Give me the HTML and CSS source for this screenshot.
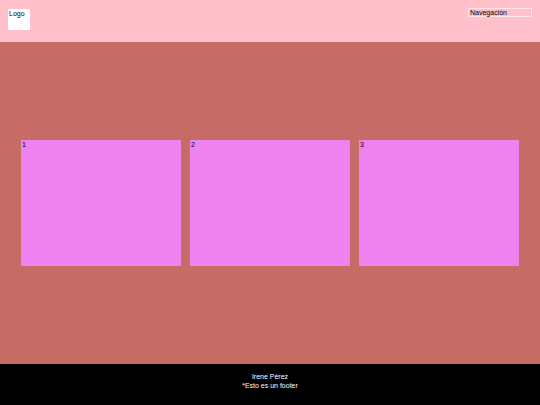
FILE: index.html
```html
<!DOCTYPE html>
<html lang="es">
<head>
<meta charset="utf-8">
<link rel="stylesheet" href="styles.css">
<title>Page</title>
</head>
<body>
<header class="header">
  <div class="logo">Logo</div>
  <nav class="nav">Navegación</nav>
</header>
<main class="main">
  <div class="cards">
    <div class="card">1</div>
    <div class="card">2</div>
    <div class="card">3</div>
  </div>
</main>
<footer class="footer">
  <p>Irene Pérez</p>
  <p>*Esto es un footer</p>
</footer>
</body>
</html>
```
FILE: styles.css
```css
html, body {
  margin: 0;
  padding: 0;
}
body {
  width: 540px;
  height: 405px;
  display: flex;
  flex-direction: column;
  font-family: "Liberation Sans", Arial, sans-serif;
  font-size: 7px;
}
.header {
  height: 42px;
  background: #ffc0cb;
  display: flex;
  justify-content: space-between;
  align-items: flex-start;
  padding: 8px 8px 0 8px;
  box-sizing: border-box;
}
.logo {
  width: 22px;
  height: 21px;
  margin-top: 1px;
  background: #ffffff;
  line-height: 8px;
  padding: 1px 0 0 1px;
  box-sizing: border-box;
  color: #000;
}
.nav {
  width: 64px;
  height: 9px;
  border: 1px solid #ffe6ea;
  box-sizing: border-box;
  line-height: 7px;
  padding-left: 1px;
  color: #000;
}
.main {
  flex: 1;
  background: #c76b67;
  display: flex;
  align-items: center;
  padding: 0 21px;
}
.cards {
  flex: 1;
  display: flex;
  gap: 9px;
}
.card {
  flex: 1;
  height: 126px;
  background: #ee82ee;
  line-height: 8px;
  padding: 1px 0 0 1px;
  box-sizing: border-box;
  color: #000;
}
.footer {
  height: 41px;
  background: #000;
  color: #fff;
  text-align: center;
  padding-top: 8px;
  box-sizing: border-box;
}
.footer p {
  margin: 0;
  line-height: 9px;
}
```
